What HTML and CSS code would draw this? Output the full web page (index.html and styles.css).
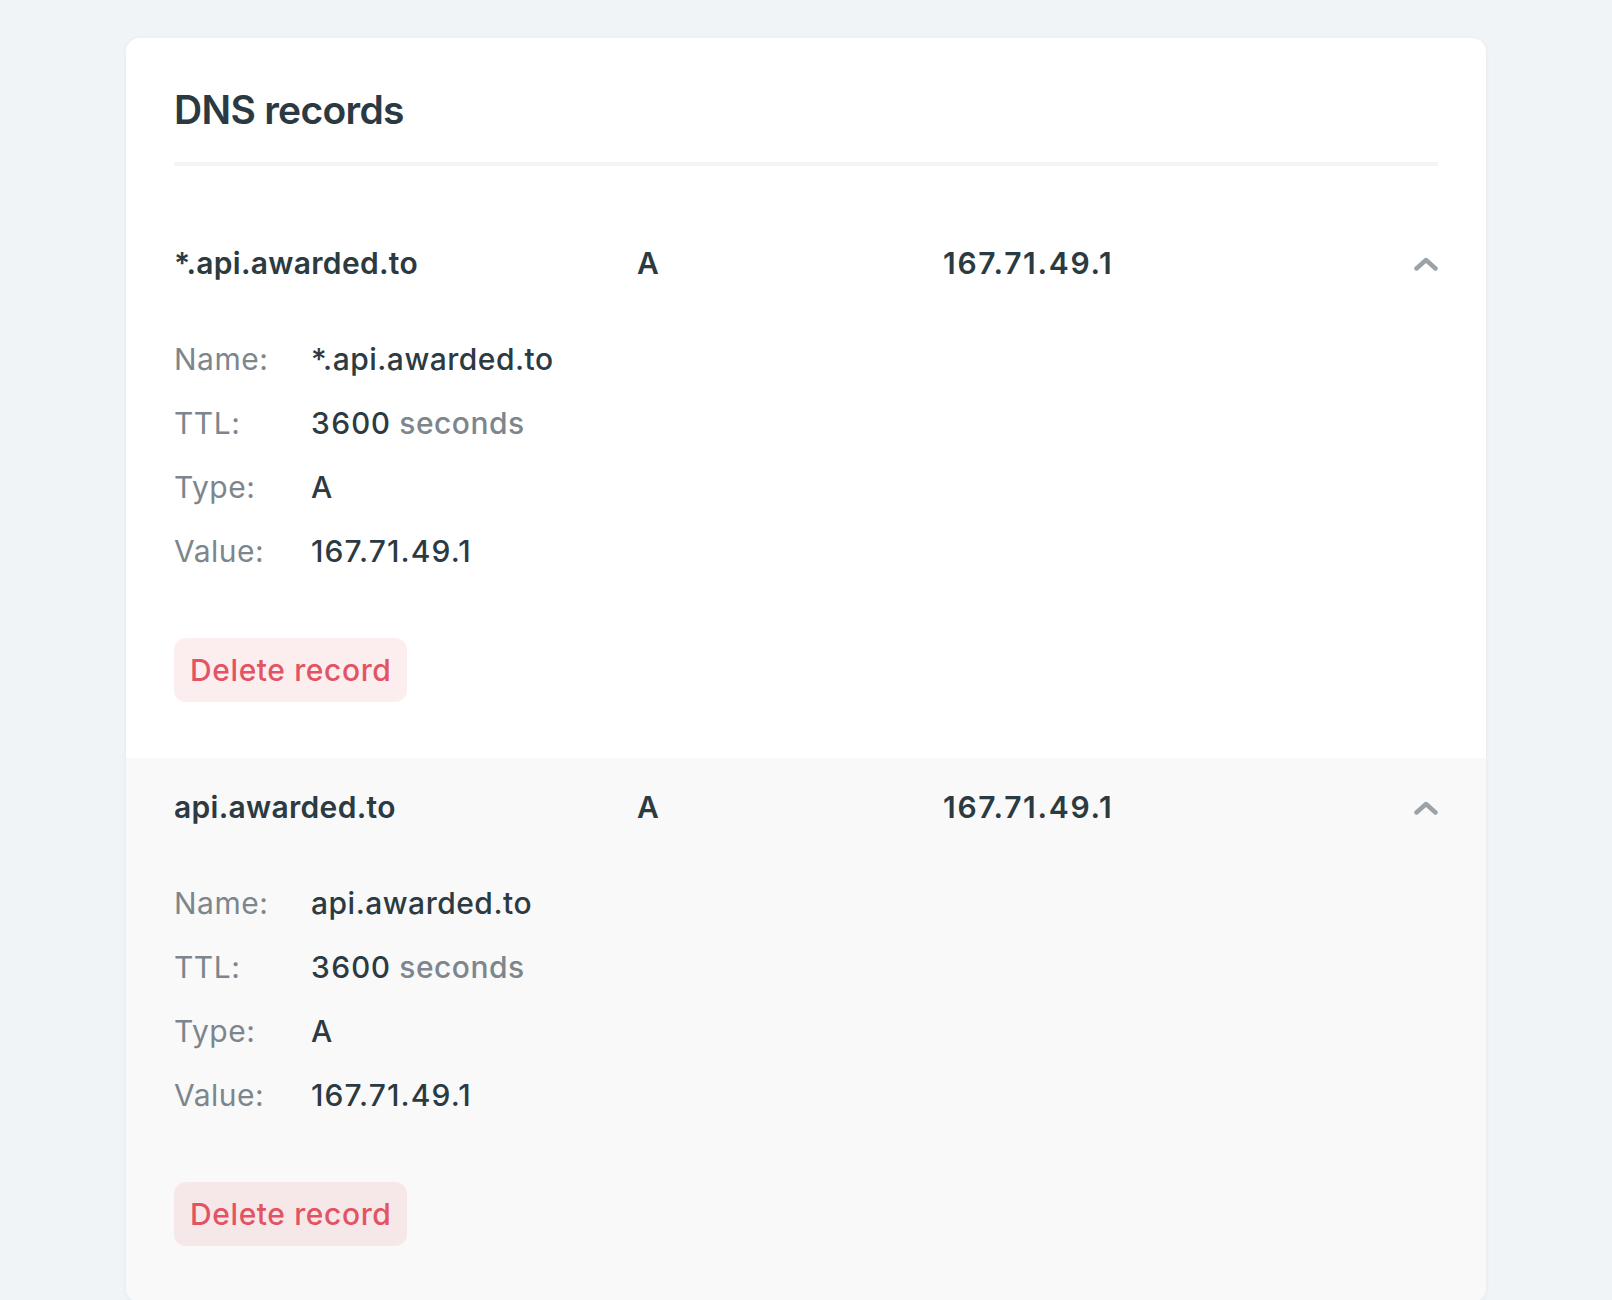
FILE: index.html
```html
<!DOCTYPE html>
<html lang="en">
<head>
<meta charset="utf-8">
<title>DNS records</title>
<link rel="stylesheet" href="styles.css">
</head>
<body>
<div class="page">
  <section class="card">
    <header class="card-header">
      <h1 class="card-title">DNS records</h1>
      <div class="divider"></div>
    </header>

    <div class="record">
      <div class="record-row">
        <span class="col-name">*.api.awarded.to</span>
        <span class="col-type">A</span>
        <span class="col-value ip">167.71.49.1</span>
        <span class="col-toggle">
          <svg class="chevron" width="24" height="15" viewBox="0 0 24 15"><path d="M2.5 12.5 L12 4 L21.5 12.5" fill="none" stroke="currentColor" stroke-width="4.4" stroke-linecap="round" stroke-linejoin="round"/></svg>
        </span>
      </div>
      <dl class="details">
        <div class="detail"><dt>Name:</dt><dd>*.api.awarded.to</dd></div>
        <div class="detail"><dt>TTL:</dt><dd><span class="num">3600</span> <span class="muted">seconds</span></dd></div>
        <div class="detail"><dt>Type:</dt><dd>A</dd></div>
        <div class="detail"><dt>Value:</dt><dd class="ip">167.71.49.1</dd></div>
      </dl>
      <button class="btn-delete" type="button">Delete record</button>
    </div>

    <div class="record record-alt">
      <div class="record-row">
        <span class="col-name">api.awarded.to</span>
        <span class="col-type">A</span>
        <span class="col-value ip">167.71.49.1</span>
        <span class="col-toggle">
          <svg class="chevron" width="24" height="15" viewBox="0 0 24 15"><path d="M2.5 12.5 L12 4 L21.5 12.5" fill="none" stroke="currentColor" stroke-width="4.4" stroke-linecap="round" stroke-linejoin="round"/></svg>
        </span>
      </div>
      <dl class="details">
        <div class="detail"><dt>Name:</dt><dd>api.awarded.to</dd></div>
        <div class="detail"><dt>TTL:</dt><dd><span class="num">3600</span> <span class="muted">seconds</span></dd></div>
        <div class="detail"><dt>Type:</dt><dd>A</dd></div>
        <div class="detail"><dt>Value:</dt><dd class="ip">167.71.49.1</dd></div>
      </dl>
      <button class="btn-delete" type="button">Delete record</button>
    </div>
  </section>
</div>
</body>
</html>
```

FILE: styles.css
```css
* { box-sizing: border-box; }

html, body {
  margin: 0;
  padding: 0;
  background: #f0f4f7;
}

body {
  font-family: Inter, "Noto Sans", "Liberation Sans", sans-serif;
  color: #2c3a42;
}

.page {
  padding-top: 38px;
}

.card {
  width: 1360px;
  margin: 0 auto;
  background: #ffffff;
  border-radius: 14px;
  box-shadow: 0 1px 4px rgba(30, 50, 70, 0.07);
  overflow: hidden;
}

.card-header {
  padding: 48px 48px 48px;
}

.card-title {
  margin: 0;
  font-size: 39px;
  line-height: 48px;
  font-weight: 600;
  letter-spacing: -0.7px;
  color: #2b3a42;
}

.divider {
  margin-top: 28px;
  height: 4px;
  background: #f3f4f5;
}

.record {
  padding: 31px 48px 56px;
  background: #ffffff;
}

.record-alt {
  background: #f9f9f9;
}

.record-row {
  display: grid;
  grid-template-columns: 463px 306px 1fr auto;
  align-items: center;
  font-size: 30px;
  line-height: 36px;
  font-weight: 600;
  letter-spacing: 0.3px;
  color: #2c3a42;
}

.record-row .ip {
  letter-spacing: 1.7px;
}

.num {
  font-variant-numeric: tabular-nums;
}

.col-toggle {
  display: flex;
  align-items: center;
  color: #9ba3a8;
}

.chevron {
  display: block;
}

.details {
  margin: 46px 0 0;
  padding: 0;
}

.detail {
  display: flex;
  height: 64px;
  align-items: center;
  font-size: 30px;
  line-height: 36px;
  letter-spacing: 0.5px;
}

.detail dt {
  width: 137px;
  color: #7c868c;
  font-weight: 400;
}

.detail dd {
  margin: 0;
  color: #2c3a42;
  font-weight: 500;
}

.detail .ip {
  letter-spacing: 1.1px;
}

.muted {
  color: #7c868c;
}

.btn-delete {
  display: inline-block;
  margin-top: 55px;
  padding: 14px 16px;
  border: 0;
  border-radius: 12px;
  background: rgba(226, 84, 99, 0.1);
  color: #e25464;
  font-family: inherit;
  font-size: 30px;
  line-height: 36px;
  font-weight: 500;
  letter-spacing: 0.6px;
  cursor: pointer;
}
```
